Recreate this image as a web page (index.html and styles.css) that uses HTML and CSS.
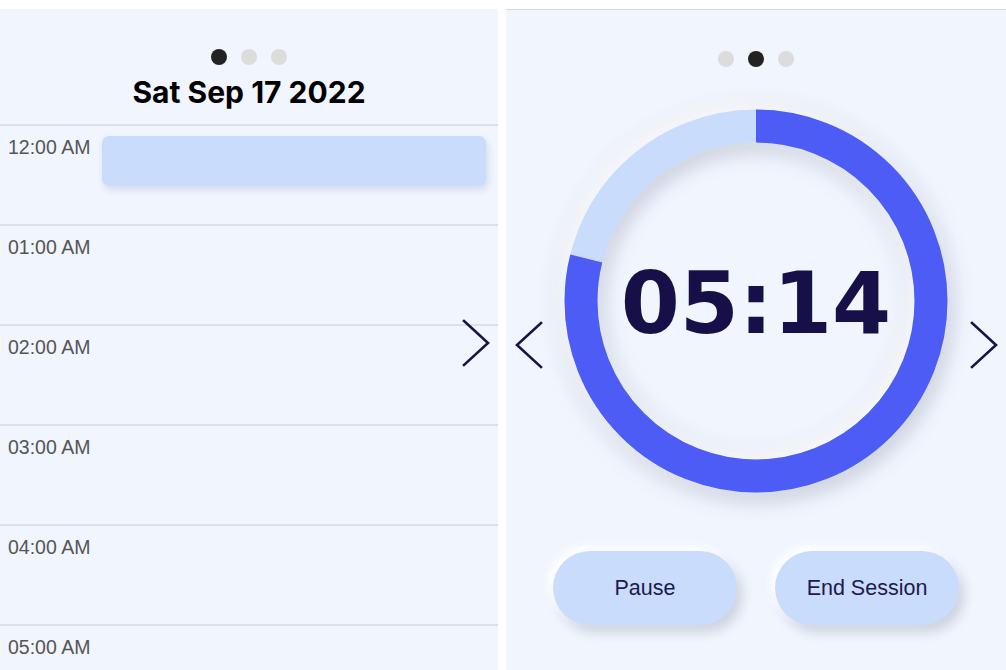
FILE: index.html
```html
<!DOCTYPE html>
<html lang="en">
<head>
<meta charset="utf-8">
<title>Planner</title>
<link rel="stylesheet" href="styles.css">
</head>
<body>
<div class="app">
  <section class="panel day">
    <div class="dots">
      <span class="dot active"></span><span class="dot"></span><span class="dot"></span>
    </div>
    <h1 class="date">Sat Sep 17 2022</h1>
    <div class="hours">
      <div class="hour"><span class="label">12:00 AM</span><div class="event"></div></div>
      <div class="hour"><span class="label">01:00 AM</span></div>
      <div class="hour"><span class="label">02:00 AM</span></div>
      <div class="hour"><span class="label">03:00 AM</span></div>
      <div class="hour"><span class="label">04:00 AM</span></div>
      <div class="hour"><span class="label">05:00 AM</span></div>
    </div>
    <svg class="chev chev-right-day" viewBox="0 0 28 48"><polyline points="2,2 26,24 2,46"/></svg>
  </section>
  <section class="panel timer">
    <div class="dots">
      <span class="dot"></span><span class="dot active"></span><span class="dot"></span>
    </div>
    <div class="ring-wrap">
      <svg class="ring" viewBox="0 0 384 384">
        <circle class="track" cx="192" cy="192" r="175"/>
        <circle class="progress" cx="192" cy="192" r="175" stroke-dasharray="867.4 1099.6" transform="rotate(-90 192 192)"/>
      </svg>
      <div class="clock">05:14</div>
    </div>
    <div class="buttons">
      <button class="btn">Pause</button>
      <button class="btn">End Session</button>
    </div>
    <svg class="chev chev-left" viewBox="0 0 28 48"><polyline points="26,2 2,24 26,46"/></svg>
    <svg class="chev chev-right" viewBox="0 0 28 48"><polyline points="2,2 26,24 2,46"/></svg>
  </section>
</div>
</body>
</html>
```
FILE: styles.css
```css
* { box-sizing: border-box; }
html, body { margin: 0; padding: 0; background: #ffffff; }
body { width: 1006px; height: 670px; overflow: hidden; font-family: "Liberation Sans", Arial, sans-serif; }

.app {
  display: flex;
  gap: 8px;
  padding-top: 9px;
  height: 670px;
}

.panel {
  position: relative;
  background: #f0f5fe;
  height: 661px;
  overflow: hidden;
}

.day { width: 498px; padding-top: 40px; }
.timer {
  width: 500px;
  border-top: 1px solid #d6dae0;
  padding-top: 41px;
  display: flex;
  flex-direction: column;
  align-items: center;
}

.dots {
  display: flex;
  justify-content: center;
  gap: 14px;
}
.dot {
  width: 16px;
  height: 16px;
  border-radius: 50%;
  background: #dcdcdc;
}
.dot.active { background: #222222; }

.date {
  margin: 10px 0 0;
  text-align: center;
  font-family: Inter, "Liberation Sans", sans-serif;
  font-weight: 700;
  font-size: 30px;
  line-height: 35px;
  color: #000;
}

.hours { margin-top: 14px; }
.hour {
  height: 100px;
  border-top: 2px solid #dce1ea;
  display: flex;
  align-items: flex-start;
  padding: 10px 12px 0 8px;
}
.label {
  width: 94px;
  flex: none;
  font-size: 19.5px;
  color: #555555;
  line-height: 22px;
}
.event {
  flex: 1;
  height: 50px;
  background: #c9dcfb;
  border-radius: 7px;
  box-shadow: 2px 4px 7px rgba(60, 80, 120, 0.15);
}

.chev {
  position: absolute;
  width: 28px;
  height: 48px;
  fill: none;
  stroke: #1a1446;
  stroke-width: 2.6;
  stroke-linecap: square;
  top: 310px;
}
.chev-right-day { left: 462px; }
.chev-left { left: 9px; top: 311px; }
.chev-right { left: 464px; top: 311px; }

.ring-wrap {
  margin-top: 42px;
  width: 384px;
  height: 384px;
  display: grid;
  place-items: center;
}
.ring-wrap > * { grid-area: 1 / 1; }
.ring {
  width: 384px;
  height: 384px;
  overflow: visible;
  filter: drop-shadow(-6px -6px 10px rgba(255, 255, 255, 0.9)) drop-shadow(4px 7px 9px rgba(40, 50, 80, 0.22));
}
.ring circle { fill: none; stroke-width: 33; }
.track { stroke: #c9dcfb; }
.progress { stroke: #4c5cf4; }

.clock {
  font-family: "DejaVu Sans", Verdana, sans-serif;
  font-weight: 700;
  font-size: 85px;
  color: #160f48;
  line-height: 1;
  margin-top: 4px;
}

.buttons {
  margin-top: 58px;
  display: flex;
  gap: 38px;
}
.btn {
  width: 184px;
  height: 74px;
  border: none;
  border-radius: 37px;
  background: #c9dcfb;
  color: #1e1a4d;
  font-family: "Liberation Sans", Arial, sans-serif;
  font-size: 21.5px;
  box-shadow: -5px -5px 10px rgba(255, 255, 255, 0.9), 5px 7px 12px rgba(40, 50, 80, 0.18);
  padding: 0;
}
```
